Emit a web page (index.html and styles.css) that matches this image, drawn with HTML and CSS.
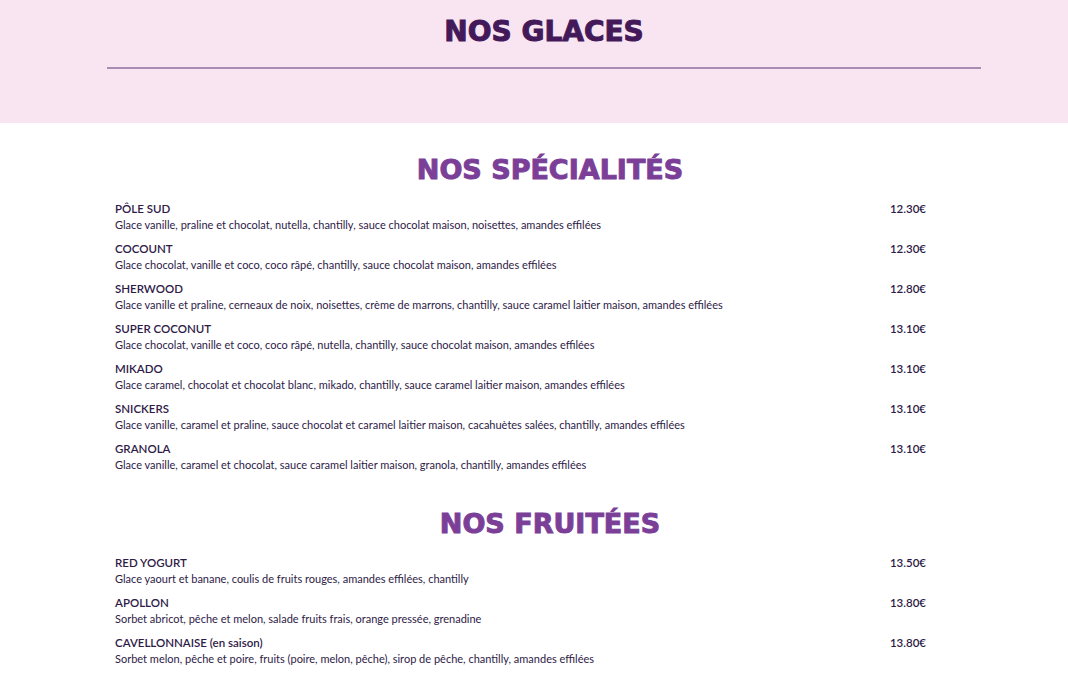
FILE: index.html
```html
<!DOCTYPE html>
<html lang="fr">
<head>
<meta charset="utf-8">
<title>Nos glaces</title>
<link rel="stylesheet" href="styles.css">
</head>
<body>
<header class="hero">
  <div class="hero-inner">
    <h1 class="hero-title">NOS GLACES</h1>
    <div class="hero-rule"></div>
  </div>
</header>
<main class="menu">
  <section class="section">
    <h2 class="section-title">NOS SPÉCIALITÉS</h2>
    <ul class="items">
      <li class="item"><div class="item-text"><div class="item-name">PÔLE SUD</div><div class="item-desc">Glace vanille, praline et chocolat, nutella, chantilly, sauce chocolat maison, noisettes, amandes effilées</div></div><div class="item-price">12.30€</div></li>
      <li class="item"><div class="item-text"><div class="item-name">COCOUNT</div><div class="item-desc">Glace chocolat, vanille et coco, coco râpé, chantilly, sauce chocolat maison, amandes effilées</div></div><div class="item-price">12.30€</div></li>
      <li class="item"><div class="item-text"><div class="item-name">SHERWOOD</div><div class="item-desc">Glace vanille et praline, cerneaux de noix, noisettes, crème de marrons, chantilly, sauce caramel laitier maison, amandes effilées</div></div><div class="item-price">12.80€</div></li>
      <li class="item"><div class="item-text"><div class="item-name">SUPER COCONUT</div><div class="item-desc">Glace chocolat, vanille et coco, coco râpé, nutella, chantilly, sauce chocolat maison, amandes effilées</div></div><div class="item-price">13.10€</div></li>
      <li class="item"><div class="item-text"><div class="item-name">MIKADO</div><div class="item-desc">Glace caramel, chocolat et chocolat blanc, mikado, chantilly, sauce caramel laitier maison, amandes effilées</div></div><div class="item-price">13.10€</div></li>
      <li class="item"><div class="item-text"><div class="item-name">SNICKERS</div><div class="item-desc">Glace vanille, caramel et praline, sauce chocolat et caramel laitier maison, cacahuètes salées, chantilly, amandes effilées</div></div><div class="item-price">13.10€</div></li>
      <li class="item"><div class="item-text"><div class="item-name">GRANOLA</div><div class="item-desc">Glace vanille, caramel et chocolat, sauce caramel laitier maison, granola, chantilly, amandes effilées</div></div><div class="item-price">13.10€</div></li>
    </ul>
  </section>
  <section class="section">
    <h2 class="section-title">NOS FRUITÉES</h2>
    <ul class="items">
      <li class="item"><div class="item-text"><div class="item-name">RED YOGURT</div><div class="item-desc">Glace yaourt et banane, coulis de fruits rouges, amandes effilées, chantilly</div></div><div class="item-price">13.50€</div></li>
      <li class="item"><div class="item-text"><div class="item-name">APOLLON</div><div class="item-desc">Sorbet abricot, pêche et melon, salade fruits frais, orange pressée, grenadine</div></div><div class="item-price">13.80€</div></li>
      <li class="item"><div class="item-text"><div class="item-name">CAVELLONNAISE (en saison)</div><div class="item-desc">Sorbet melon, pêche et poire, fruits (poire, melon, pêche), sirop de pêche, chantilly, amandes effilées</div></div><div class="item-price">13.80€</div></li>
    </ul>
  </section>
</main>
</body>
</html>
```
FILE: styles.css
```css
* { box-sizing: border-box; }
html, body { margin: 0; padding: 0; }
body {
  background: #ffffff;
  font-family: "Lato", "Liberation Sans", sans-serif;
  color: #2e1a47;
}
.hero {
  background: #f8e5f1;
  height: 123px;
  padding: 15px 0 0 107px;
}
.hero-inner { width: 874px; }
.hero-title {
  margin: 0;
  font-family: "DejaVu Sans", sans-serif;
  font-weight: 800;
  font-size: 28px;
  line-height: 34px;
  text-align: center;
  color: #43195a;
  -webkit-text-stroke: 1px #43195a;
}
.hero-rule {
  margin-top: 18px;
  height: 2px;
  background: #a98cb3;
}
.menu {
  padding: 30px 0 0 115px;
  width: 985px;
}
.section + .section { margin-top: 34px; }
.section-title {
  margin: 0 0 14px;
  font-family: "DejaVu Sans", sans-serif;
  font-weight: 800;
  font-size: 27px;
  line-height: 34px;
  text-align: center;
  color: #7b3f98;
  -webkit-text-stroke: 1px #7b3f98;
}
.items { list-style: none; margin: 0; padding: 0; width: 811px; }
.item {
  display: flex;
  justify-content: space-between;
  align-items: flex-start;
}
.item + .item { margin-top: 8px; }
.item-name {
  font-size: 11.5px;
  line-height: 16px;
  font-weight: 600;
}
.item-desc {
  font-size: 11px;
  line-height: 16px;
}
.item-price {
  font-size: 11.5px;
  line-height: 16px;
  font-weight: 600;
}
```
